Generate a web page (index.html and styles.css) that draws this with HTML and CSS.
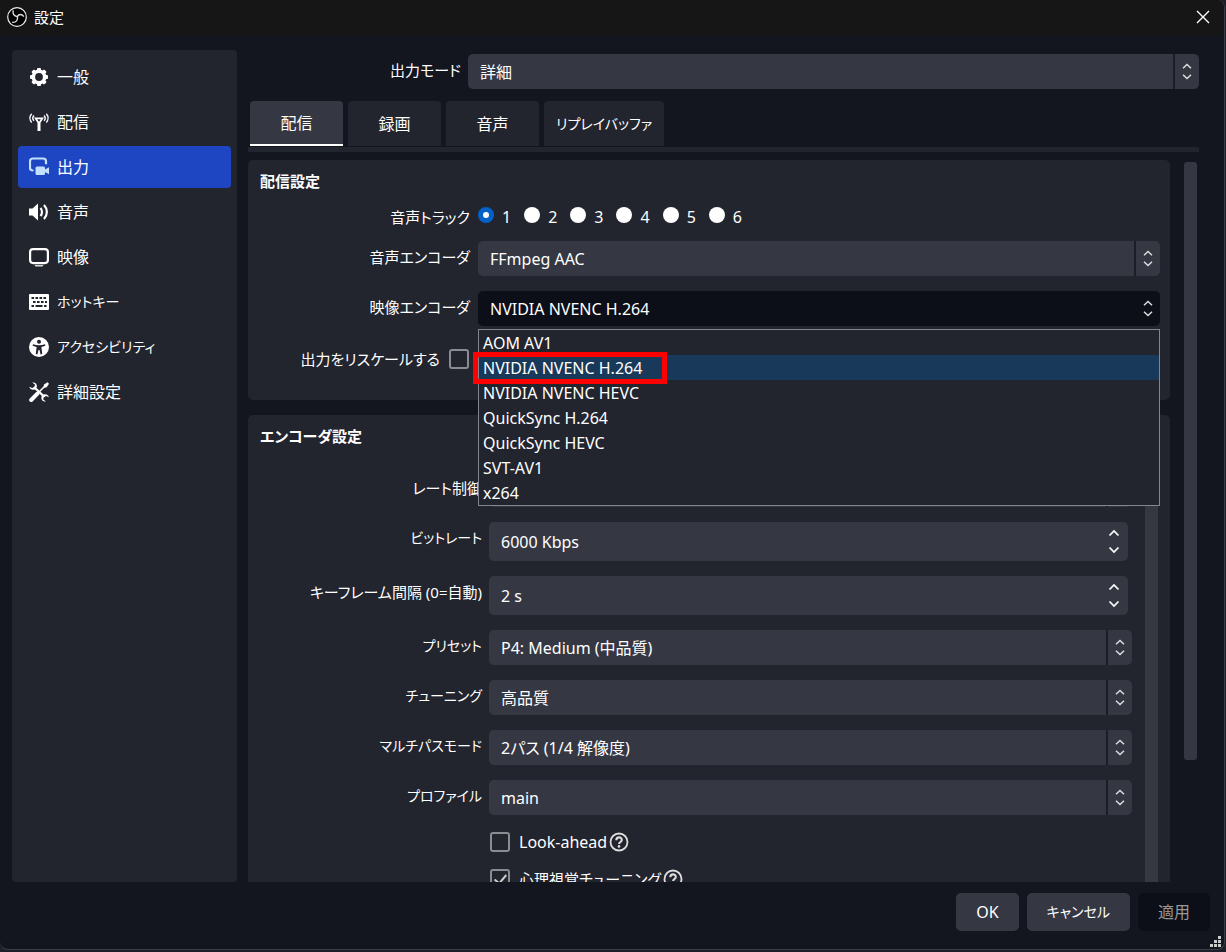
FILE: index.html
```html
<!DOCTYPE html>
<html lang="ja">
<head>
<meta charset="utf-8">
<title>設定</title>
<link rel="stylesheet" href="styles.css">
</head>
<body>
<svg class="defs" aria-hidden="true">
  <symbol id="updown" viewBox="0 0 10 17"><path d="M1 5.300 5 1.500l4 3.800M1 11.700l4 3.800 4-3.800" fill="none" stroke="currentColor" stroke-width="1.500"/></symbol>
  <symbol id="up" viewBox="0 0 12 8"><path d="M1.500 6.500 6 2l4.500 4.500" fill="none" stroke="currentColor" stroke-width="1.700"/></symbol>
  <symbol id="down" viewBox="0 0 12 8"><path d="M1.500 1.500 6 6l4.500-4.500" fill="none" stroke="currentColor" stroke-width="1.700"/></symbol>
  <symbol id="help" viewBox="0 0 20 20"><circle cx="10" cy="10" r="8.500" fill="none" stroke="currentColor" stroke-width="1.800"/><path d="M7.300 8.200C7.300 4.400 12.900 4.600 12.800 8c0 2-2.700 2-2.700 4" fill="none" stroke="currentColor" stroke-width="2.100"/><circle cx="10" cy="14.400" r="1.300" fill="currentColor"/></symbol>
</svg>
<div class="window">
  <header class="titlebar">
    <svg class="logo" viewBox="0 0 20 20"><circle cx="10" cy="10" r="9.300" fill="#000" stroke="#eee" stroke-width="1.200"/><path d="M6.200 3.300C5.600 6.500 7.300 9 10.300 9.600M16.800 9.600C15 6.800 11.800 6.800 10.300 9.600M10.300 9.600C11.300 13 9 15.800 5.200 15.300" fill="none" stroke="#ddd" stroke-width="1.400"/></svg>
    <h1 class="title">設定</h1>
    <button class="close" type="button" aria-label="閉じる"><svg viewBox="0 0 14 14"><path d="m1 1 12 12M13 1 1 13" stroke="#fff" stroke-width="1.400"/></svg></button>
  </header>

  <div class="content">
    <nav class="sidebar">
      <a class="nav-item" href="#general"><svg viewBox="0 0 20 20"><g fill="#fff"><path fill-rule="evenodd" d="M10 2.600a7.400 7.400 0 1 0 0 14.800 7.400 7.400 0 0 0 0-14.800Zm0 3.500a3.900 3.900 0 1 1 0 7.800 3.900 3.900 0 0 1 0-7.800Z"/><rect x="8" y="1" width="4" height="3" rx="1"/><rect x="8" y="16" width="4" height="3" rx="1"/><rect x="1" y="8" width="3" height="4" rx="1"/><rect x="16" y="8" width="3" height="4" rx="1"/><g transform="rotate(45 10 10)"><rect x="8" y="1" width="4" height="3" rx="1"/><rect x="8" y="16" width="4" height="3" rx="1"/><rect x="1" y="8" width="3" height="4" rx="1"/><rect x="16" y="8" width="3" height="4" rx="1"/></g></g></svg>一般</a>
      <a class="nav-item" href="#stream"><svg viewBox="0 0 20 20"><path d="M5 5.500h10l-3.500 5.200V19h-3v-8.300Zm3.200 1.800L10 9.800l1.800-2.500Z" fill="#fff" fill-rule="evenodd"/><path d="M2.700 1.700c-2.300 2.600-2.300 6.200 0 8.800M5 3.500c-1.500 1.600-1.500 3.700 0 5.300M17.300 1.700c2.300 2.600 2.300 6.200 0 8.800M15 3.500c1.500 1.600 1.500 3.700 0 5.300" fill="none" stroke="#fff" stroke-width="1.400"/></svg>配信</a>
      <a class="nav-item active" href="#output" aria-current="page"><svg viewBox="0 0 20 20"><path d="M4.500 13.500h-.7A2.800 2.800 0 0 1 1 10.700V4.300a2.800 2.800 0 0 1 2.800-2.800h10.400A2.800 2.800 0 0 1 17 4.300v3" fill="none" stroke="#c4e0ff" stroke-width="2.200"/><path d="M8 9.500h6.500a1.500 1.500 0 0 1 1.500 1.500v1.500l4-2.300v7l-4-2.200v1.500a1.500 1.500 0 0 1-1.500 1.500H8A1.500 1.500 0 0 1 6.500 16.500V11A1.500 1.500 0 0 1 8 9.500Z" fill="#c4e0ff"/></svg>出力</a>
      <a class="nav-item" href="#audio"><svg viewBox="0 0 20 20"><path d="M0 6.500h3.500L9 1.500v17l-5.500-5H0Z" fill="#fff"/><path d="M11.500 6c2 2.200 2 5.800 0 8M15 3c3.800 4 3.800 10 0 14" fill="none" stroke="#fff" stroke-width="2.200"/></svg>音声</a>
      <a class="nav-item" href="#video"><svg viewBox="0 0 20 20"><rect x="1.100" y="2.100" width="17.800" height="14" rx="3" fill="none" stroke="#fff" stroke-width="2.200"/><path d="M5.500 18h9l-1 1.500h-7Z" fill="#ddd"/></svg>映像</a>
      <a class="nav-item kana" href="#hotkeys"><svg viewBox="0 0 20 20"><rect y="2" width="20" height="16" rx="1" fill="#fff"/><path d="M2.500 6h14.500M4 10h14" stroke="#22242e" stroke-width="2.200" stroke-dasharray="2.600 1.400"/><path d="M2.500 14h2.500m1.500 0h7m1.500 0h2.500" stroke="#22242e" stroke-width="2.200"/></svg>ホットキー</a>
      <a class="nav-item kana" href="#accessibility"><svg viewBox="0 0 20 20"><circle cx="10" cy="10" r="10" fill="#fff"/><circle cx="10" cy="4.700" r="2" fill="#22242e"/><path d="M4 7.300c4 1.300 8 1.300 12 0l.4 1.500-4 1.300.8 7-1.600.3-1.100-4.500h-1l-1.100 4.500-1.600-.3.800-7-4-1.300Z" fill="#22242e"/></svg>アクセシビリティ</a>
      <a class="nav-item" href="#advanced"><svg viewBox="0 0 20 20"><path d="m16.500 3.500-8 8" stroke="#fff" stroke-width="1.600"/><path d="m15 2.500 3.500-2.300L20 1.700l-2.300 3.500-2.200.6-1-1Z" fill="#fff"/><path d="m2.200 18 6.200-6.300" stroke="#fff" stroke-width="4" stroke-linecap="round"/><path d="m5 5 10.500 10" stroke="#fff" stroke-width="2.300"/><path d="M3.200.5C6.800-.3 9 3 7.300 6 5.500 9 1 8.200.3 4.800l2.800 1.300L5.600 5l.3-2.500ZM17 19.500c-3.600.8-5.800-2.500-4.100-5.500 1.800-3 6.300-2.200 7 1.200l-2.800-1.300-2.500 1.100-.3 2.500Z" fill="#fff"/></svg>詳細設定</a>
    </nav>

    <main class="main">
      <div class="mode-row">
        <label class="label" for="mode">出力モード</label>
        <div class="combo"><select id="mode"><option>詳細</option></select><svg><use href="#updown"/></svg></div>
      </div>
      <div class="tabs" role="tablist">
        <button class="tab selected" type="button" role="tab" aria-selected="true">配信</button>
        <button class="tab" type="button" role="tab">録画</button>
        <button class="tab" type="button" role="tab">音声</button>
        <button class="tab kana" type="button" role="tab">リプレイバッファ</button>
      </div>
      <div class="scroll">
        <div class="groups">
          <section class="group">
            <h2>配信設定</h2>
            <div class="form">
              <div class="row radios" role="radiogroup" aria-labelledby="track-label">
                <span class="label" id="track-label">音声トラック</span>
                <div class="radio-list">
                  <label><input type="radio" name="track" checked>1</label>
                  <label><input type="radio" name="track">2</label>
                  <label><input type="radio" name="track">3</label>
                  <label><input type="radio" name="track">4</label>
                  <label><input type="radio" name="track">5</label>
                  <label><input type="radio" name="track">6</label>
                </div>
              </div>
              <div class="row">
                <label class="label" for="aenc">音声エンコーダ</label>
                <div class="combo"><select id="aenc"><option>FFmpeg AAC</option></select><svg><use href="#updown"/></svg></div>
              </div>
              <div class="row">
                <label class="label" for="venc">映像エンコーダ</label>
                <div class="combo open">
                  <select id="venc"><option>NVIDIA NVENC H.264</option></select><svg><use href="#updown"/></svg>
                  <ul class="popup" role="listbox" aria-label="映像エンコーダ">
                    <li role="option">AOM AV1</li>
                    <li role="option" class="current" aria-selected="true">NVIDIA NVENC H.264</li>
                    <li role="option">NVIDIA NVENC HEVC</li>
                    <li role="option">QuickSync H.264</li>
                    <li role="option">QuickSync HEVC</li>
                    <li role="option">SVT-AV1</li>
                    <li role="option">x264</li>
                  </ul>
                </div>
              </div>
              <div class="row rescale">
                <label class="check">出力をリスケールする<input type="checkbox"></label>
              </div>
            </div>
          </section>

          <section class="group encoder">
            <h2>エンコーダ設定</h2>
            <div class="inner">
              <div class="form">
                <div class="row"><label class="label" for="rate">レート制御</label>
                  <div class="combo"><select id="rate"><option>CBR</option></select><svg><use href="#updown"/></svg></div></div>
                <div class="row"><label class="label kana" for="bitrate">ビットレート</label>
                  <div class="spin"><input id="bitrate" type="text" value="6000 Kbps"><div class="steps"><button type="button" aria-label="増やす"><svg><use href="#up"/></svg></button><button type="button" aria-label="減らす"><svg><use href="#down"/></svg></button></div></div></div>
                <div class="row"><label class="label" for="keyint">キーフレーム間隔 (0=自動)</label>
                  <div class="spin"><input id="keyint" type="text" value="2 s"><div class="steps"><button type="button" aria-label="増やす"><svg><use href="#up"/></svg></button><button type="button" aria-label="減らす"><svg><use href="#down"/></svg></button></div></div></div>
                <div class="row"><label class="label kana" for="preset">プリセット</label>
                  <div class="combo"><select id="preset"><option>P4: Medium (中品質)</option></select><svg><use href="#updown"/></svg></div></div>
                <div class="row"><label class="label kana" for="tuning">チューニング</label>
                  <div class="combo"><select id="tuning"><option>高品質</option></select><svg><use href="#updown"/></svg></div></div>
                <div class="row"><label class="label kana" for="multipass">マルチパスモード</label>
                  <div class="combo"><select id="multipass"><option>2パス (1/4 解像度)</option></select><svg><use href="#updown"/></svg></div></div>
                <div class="row"><label class="label kana" for="profile">プロファイル</label>
                  <div class="combo"><select id="profile"><option>main</option></select><svg><use href="#updown"/></svg></div></div>
                <div class="checks">
                  <label class="check"><input type="checkbox">Look-ahead<svg class="help"><use href="#help"/></svg></label>
                  <label class="check mixed"><input type="checkbox" checked>心理視覚チューニング<svg class="help"><use href="#help"/></svg></label>
                </div>
              </div>
              <div class="bar"></div>
            </div>
          </section>
        </div>
        <div class="track"><div class="thumb"></div></div>
      </div>
    </main>
  </div>

  <footer class="footer">
    <button class="btn" type="button">OK</button>
    <button class="btn kana" type="button">キャンセル</button>
    <button class="btn" type="button" disabled>適用</button>
    <svg class="grip" viewBox="0 0 12 12"><path d="M8 0h3v3H8zM4 4h3v3H4zM8 4h3v3H8zM0 8h3v3H0zM4 8h3v3H4zM8 8h3v3H8z" fill="#ccc"/></svg>
  </footer>
</div>
</body>
</html>
```

FILE: styles.css
```css
*, *::before, *::after { box-sizing: border-box; }

:root {
  --bg: #13151f;
  --panel: #22242e;
  --control: #353843;
  --dark: #0c0e18;
}

body {
  margin: 0;
  height: 100vh;
  padding: 0 1px 2px 0;
  background: #1e2029;
  color: #fff;
  font: 16px/24px "Noto Sans", "Noto Sans CJK JP", sans-serif;
  font-feature-settings: "palt";
}

button, input, select {
  margin: 0;
  padding: 0;
  border: 0;
  color: inherit;
  font: inherit;
  font-feature-settings: inherit;
}

h1, h2, ul { margin: 0; padding: 0; font: inherit; }

.defs { display: none; }

.window {
  display: flex;
  flex-direction: column;
  height: 100%;
  overflow: hidden;
  background: var(--bg);
  border: solid #3c3e47;
  border-width: 0 1px 1px 0;
  border-radius: 0 8px 8px 8px;
}

.titlebar {
  display: flex;
  align-items: center;
  gap: 7px;
  height: 36px;
  padding: 0 14px 2px 7px;
  background: #161616;
}
.logo { width: 20px; height: 20px; }
.title { flex: 1; font-size: 15px; }
.close { display: flex; background: none; }
.close svg { width: 14px; height: 14px; }

.content {
  flex: 1;
  min-height: 0;
  display: flex;
  gap: 11px;
  padding: 14px 25px 0 12px;
}

.sidebar {
  display: flex;
  flex-direction: column;
  gap: 3px;
  width: 225px;
  padding: 6px;
  background: var(--panel);
  border-radius: 4px;
}
.nav-item {
  display: flex;
  align-items: center;
  gap: 8px;
  height: 42px;
  padding: 0 11px;
  border-radius: 4px;
  color: #fff;
  text-decoration: none;
}
.nav-item svg { width: 20px; height: 20px; }
.nav-item.active { background: #1e46c2; }

.main {
  flex: 1;
  min-width: 0;
  display: flex;
  flex-direction: column;
  padding-top: 4px;
}

.mode-row {
  display: grid;
  grid-template-columns: 213px 1fr;
  gap: 7px;
}

.combo {
  position: relative;
  display: flex;
  height: 35px;
  background: var(--control);
  border-radius: 5px;
}
.combo select {
  flex: 1;
  appearance: none;
  padding: 0 12px;
  background: none;
  line-height: 24px;
}
.combo > svg {
  width: 26px;
  height: 35px;
  padding: 9px 7px;
  border-left: 2px solid #1b1d27;
  color: #ddd;
  pointer-events: none;
}
.combo.open { background: var(--dark); }
.combo.open > svg { border-color: transparent; }

.popup {
  position: absolute;
  z-index: 2;
  top: 38px;
  left: 0;
  right: 0;
  background: var(--panel);
  border: 1px solid #82848f;
  list-style: none;
}
.popup li {
  position: relative;
  height: 25px;
  padding-left: 4px;
  line-height: 26px;
}
.popup .current { z-index: 1; background: #19395a; }
.popup .current::after {
  content: "";
  position: absolute;
  top: -3px;
  left: -6px;
  width: 194px;
  height: 32px;
  border: 5px solid #f00;
}

.tabs {
  display: flex;
  gap: 5px;
  margin-top: 12px;
  padding: 0 2px 1px;
  border-bottom: 5px solid var(--panel);
}
.tab {
  min-width: 93px;
  height: 45px;
  padding: 0 12px;
  background: var(--panel);
  border-radius: 4px 4px 0 0;
}
.tab.selected {
  background: var(--control);
  border-bottom: 2px solid #fff;
}

.scroll {
  flex: 1;
  min-height: 0;
  display: flex;
  gap: 14px;
  margin-top: 8px;
  padding-right: 2px;
  overflow: hidden;
}
.groups { flex: 1; min-width: 0; }
.track { width: 13px; padding-top: 2px; }
.thumb { height: 83%; background: var(--control); border-radius: 3px; }

.group {
  padding: 9px 10px 15px 12px;
  background: var(--panel);
  border-radius: 5px;
}
.group + .group { margin-top: 15px; }
.group h2 { font-weight: 700; font-size: 15px; }

.form { display: flex; flex-direction: column; gap: 15px; }
.row { display: grid; grid-template-columns: 210px 1fr; gap: 8px; }
.label { font-size: 15px; text-align: right; line-height: 32px; }
.row.radios { height: 25px; margin-top: 8px; }
.radio-list { display: flex; gap: 13px; }
.radio-list label { display: flex; gap: 8px; line-height: 32px; }

input[type="radio"] {
  appearance: none;
  align-self: flex-start;
  width: 16px;
  height: 16px;
  margin-top: 6px;
  border-radius: 50%;
  background: #fff;
}
input[type="radio"]:checked { border: 5px solid #0560c8; }

.check { display: flex; align-items: center; gap: 9px; }
.rescale { height: 44px; }
.rescale .check {
  justify-content: flex-end;
  height: 35px;
  margin-right: 1px;
  font-size: 15px;
}
input[type="checkbox"] {
  appearance: none;
  display: grid;
  width: 20px;
  height: 20px;
  border: 2px solid #8b8c92;
  border-radius: 3px;
}
input[type="checkbox"]:checked::before {
  content: "";
  width: 7px;
  height: 12px;
  margin: 1px auto;
  border: solid #ccc;
  border-width: 0 2px 2px 0;
  transform: rotate(40deg);
}

.encoder { padding-right: 12px; }
.inner { display: flex; gap: 13px; margin-top: 24px; }
.inner .form { flex: 1; }
.inner .row { grid-template-columns: 222px 1fr; gap: 7px; }
.bar { width: 13px; background: var(--control); }

.spin {
  display: flex;
  height: 39px;
  margin-right: 4px;
  background: var(--control);
  border-radius: 5px;
}
.spin input { flex: 1; min-width: 0; padding: 0 12px; background: none; }
.steps { display: flex; flex-direction: column; justify-content: center; gap: 9px; width: 28px; }
.steps button { display: flex; justify-content: center; background: none; }
.steps svg { width: 12px; height: 8px; }

.checks { display: flex; flex-direction: column; gap: 13px; padding-left: 230px; }
.checks .check { height: 24px; }
.check.mixed { font-size: 15px; }
.check .help { width: 20px; height: 20px; margin-left: -7px; color: #ddd; }

.footer {
  position: relative;
  display: flex;
  justify-content: flex-end;
  gap: 8px;
  padding: 11px 14px 18px;
}
.btn {
  height: 38px;
  padding: 0 20px;
  background: var(--control);
  border-radius: 5px;
}
.btn:disabled { background: var(--dark); color: #999; }
.grip { position: absolute; right: 2px; bottom: 1px; width: 12px; height: 12px; }

.kana { font-size: 14px; }
```
